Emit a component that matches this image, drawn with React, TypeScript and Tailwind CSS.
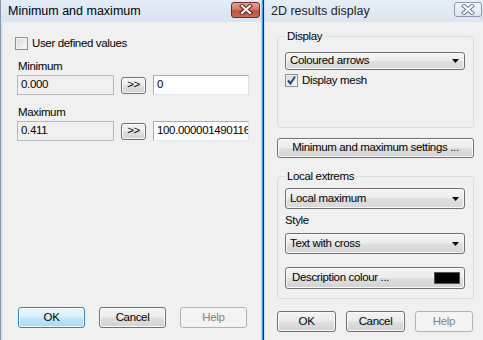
import React from "react";

const NARROW = "font-['Liberation_Sans',Arial,sans-serif] text-[11.5px] tracking-[-0.35px] text-black";
const BTN =
  "flex items-center justify-center border border-[#707070] rounded-[3px] bg-[linear-gradient(#f3f3f3_0%,#ececec_48%,#dfdfdf_52%,#d2d2d2_100%)] shadow-[inset_0_0_0_1px_#fbfbfb]";
const BTN_DEFAULT =
  "flex items-center justify-center border border-[#3c7fb1] rounded-[3px] bg-[linear-gradient(#eaf6fd_0%,#d9f0fc_48%,#bee6fd_52%,#a7d9f5_100%)] shadow-[inset_0_0_0_1px_#f4fbff]";
const BTN_DISABLED =
  "flex items-center justify-center border border-[#adb2b5] rounded-[3px] bg-[#f4f4f4] text-[#838383]";

function CloseX({ stroke, fill }: { stroke: string; fill: string }) {
  return (
    <svg width="14" height="11" viewBox="0 0 14 11">
      <path d="M3 2 L11 9 M11 2 L3 9" stroke={stroke} strokeWidth="4.2" strokeLinecap="square" />
      <path d="M3 2 L11 9 M11 2 L3 9" stroke={fill} strokeWidth="2.2" strokeLinecap="square" />
    </svg>
  );
}

function Checkbox({ checked }: { checked?: boolean }) {
  return (
    <div className="w-[13px] h-[13px] border border-[#8e8f8f] bg-[linear-gradient(135deg,#d8d8d8,#fbfbfb)] shadow-[inset_0_0_0_1px_#f2f2f2] flex items-center justify-center shrink-0">
      {checked && (
        <svg width="11" height="11" viewBox="0 0 11 11">
          <path d="M2 5.5 L4.5 8.5 L9 1.5" stroke="#24448e" strokeWidth="2" fill="none" />
        </svg>
      )}
    </div>
  );
}

function Select({ text, h }: { text: string; h: string }) {
  return (
    <div
      className={`${h} w-[180px] ml-[7px] border border-[#707070] rounded-[3px] bg-[linear-gradient(#f3f3f3_0%,#ececec_48%,#dfdfdf_52%,#d6d6d6_100%)] shadow-[inset_0_0_0_1px_#fafafa] flex items-center justify-between pl-[4px] pr-[5px] leading-none`}
    >
      <span>{text}</span>
      <svg width="7" height="4" viewBox="0 0 7 4">
        <path d="M0 0 H7 L3.5 4 Z" fill="#000" />
      </svg>
    </div>
  );
}

export default function App() {
  return (
    <div className={`flex h-[340px] w-[483px] bg-[#f0f0f0] overflow-hidden ${NARROW}`}>
      {/* Left window */}
      <div className="w-[261px] flex flex-col shrink-0">
        <div className="h-[22px] border-l border-[#8596ab] bg-[linear-gradient(#e3edf8,#d6e3f2)] flex items-center justify-between pl-[7px] pr-[1px]">
          <span className="text-[12.5px] tracking-normal text-black">Minimum and maximum</span>
          <div className="w-[29px] h-[16px] mb-[3px] rounded-[3px] border border-[#6e2a22] bg-[linear-gradient(#e4a593_0%,#d67a66_45%,#c2513c_55%,#c86b52_100%)] flex items-center justify-center">
            <CloseX stroke="#5a2018" fill="#ffffff" />
          </div>
        </div>
        <div className="flex-1 flex flex-col border-l border-[#8596ab]">
          <div className="flex-1 flex flex-col border-l-2 border-[#d6e2f0] pl-[14px]">
            <div className="mt-[15px] h-[13px] flex items-center ml-[-2px]">
              <Checkbox />
              <span className="ml-[4px] leading-[13px]">User defined values</span>
            </div>
            <div className="mt-[9px] h-[14px] leading-[14px] ml-[1px]">Minimum</div>
            <div className="mt-[2px] h-[20px] flex items-center">
              <div className="w-[97px] h-[20px] border border-[#b4b8bd] bg-[#f0f0f0] flex items-center pl-[3px] leading-none">0.000</div>
              <div className={`${BTN} ml-[7px] w-[25px] h-[17px] leading-none`}>&gt;&gt;</div>
              <div className="ml-[7px] w-[96px] h-[20px] border border-[#abadb3] border-b-[#e3e9ef] border-r-[#dbdfe6] bg-white flex items-center pl-[3px] leading-none">0</div>
            </div>
            <div className="mt-[10px] h-[14px] leading-[14px] ml-[1px]">Maximum</div>
            <div className="mt-[2px] h-[20px] flex items-center">
              <div className="w-[97px] h-[20px] border border-[#b4b8bd] bg-[#f0f0f0] flex items-center pl-[3px] leading-none">0.411</div>
              <div className={`${BTN} ml-[7px] w-[25px] h-[17px] leading-none`}>&gt;&gt;</div>
              <div className="ml-[7px] w-[96px] h-[20px] border border-[#abadb3] border-b-[#e3e9ef] border-r-[#dbdfe6] bg-white flex items-center pl-[3px] leading-none overflow-hidden whitespace-nowrap">100.0000014901161</div>
            </div>
            <div className="flex-1" />
            <div className="flex h-[21px] mb-[12px] ml-[1px] leading-none">
              <div className={`${BTN_DEFAULT} w-[67px]`}>OK</div>
              <div className={`${BTN} w-[67px] ml-[14px]`}>Cancel</div>
              <div className={`${BTN_DISABLED} w-[67px] ml-[14px]`}>Help</div>
            </div>
          </div>
        </div>
      </div>

      {/* separators */}
      <div className="w-[1px] bg-[#a6dcf5] shrink-0" />
      <div className="w-[1px] bg-[#2ea2e2] shrink-0" />
      <div className="w-[1px] bg-[#1a1a1a] shrink-0" />
      <div className="w-[1px] bg-[#c3e2f3] shrink-0" />

      {/* Right window */}
      <div className="flex-1 flex flex-col">
        <div className="h-[22px] bg-[linear-gradient(#e6eef7,#dae5f1)] flex items-center justify-between pl-[6px] pr-[2px]">
          <span className="text-[12.5px] tracking-normal text-[#222]">2D results display</span>
          <div className="w-[28px] h-[15px] mb-[3px] rounded-[3px] border border-[#8d99a9] bg-[linear-gradient(#f3f6fa,#dde4ee)] flex items-center justify-center">
            <CloseX stroke="#6f7b8a" fill="#ffffff" />
          </div>
        </div>
        <div className="flex-1 flex flex-col pl-[12px] pr-[10px]">
          {/* Display group */}
          <div className="relative mt-[14px] h-[92px] border border-[#d5dfe5] rounded-[3px] flex flex-col">
            <div className="absolute top-[-8px] left-[7px] px-[2px] bg-[#f0f0f0] leading-[14px]">Display</div>
            <div className="mt-[15px]">
              <Select text="Coloured arrows" h="h-[18px]" />
            </div>
            <div className="mt-[4px] ml-[7px] h-[13px] flex items-center">
              <Checkbox checked />
              <span className="ml-[4px] leading-[13px]">Display mesh</span>
            </div>
          </div>
          <div className={`${BTN} mt-[10px] h-[20px] w-[197px] leading-none whitespace-nowrap`}>Minimum and maximum settings ...</div>
          {/* Local extrems group */}
          <div className="relative mt-[18px] h-[123px] border border-[#d5dfe5] rounded-[3px] flex flex-col">
            <div className="absolute top-[-8px] left-[7px] px-[2px] bg-[#f0f0f0] leading-[14px]">Local extrems</div>
            <div className="mt-[11px]">
              <Select text="Local maximum" h="h-[21px]" />
            </div>
            <div className="mt-[4px] ml-[7px] h-[14px] leading-[14px]">Style</div>
            <div className="mt-[6px]">
              <Select text="Text with cross" h="h-[21px]" />
            </div>
            <div className={`${BTN} mt-[13px] ml-[7px] w-[180px] h-[22px] !justify-between pl-[6px] pr-[4px] leading-none`}>
              <span>Description colour ...</span>
              <div className="w-[26px] h-[12px] bg-black border border-[#555]" />
            </div>
          </div>
          <div className="flex h-[21px] mt-[12px] leading-none">
            <div className={`${BTN} w-[59px] border-[#3a3a3a]`}>OK</div>
            <div className={`${BTN} w-[59px] ml-[10px]`}>Cancel</div>
            <div className={`${BTN_DISABLED} w-[58px] ml-[10px]`}>Help</div>
          </div>
        </div>
      </div>
    </div>
  );
}
